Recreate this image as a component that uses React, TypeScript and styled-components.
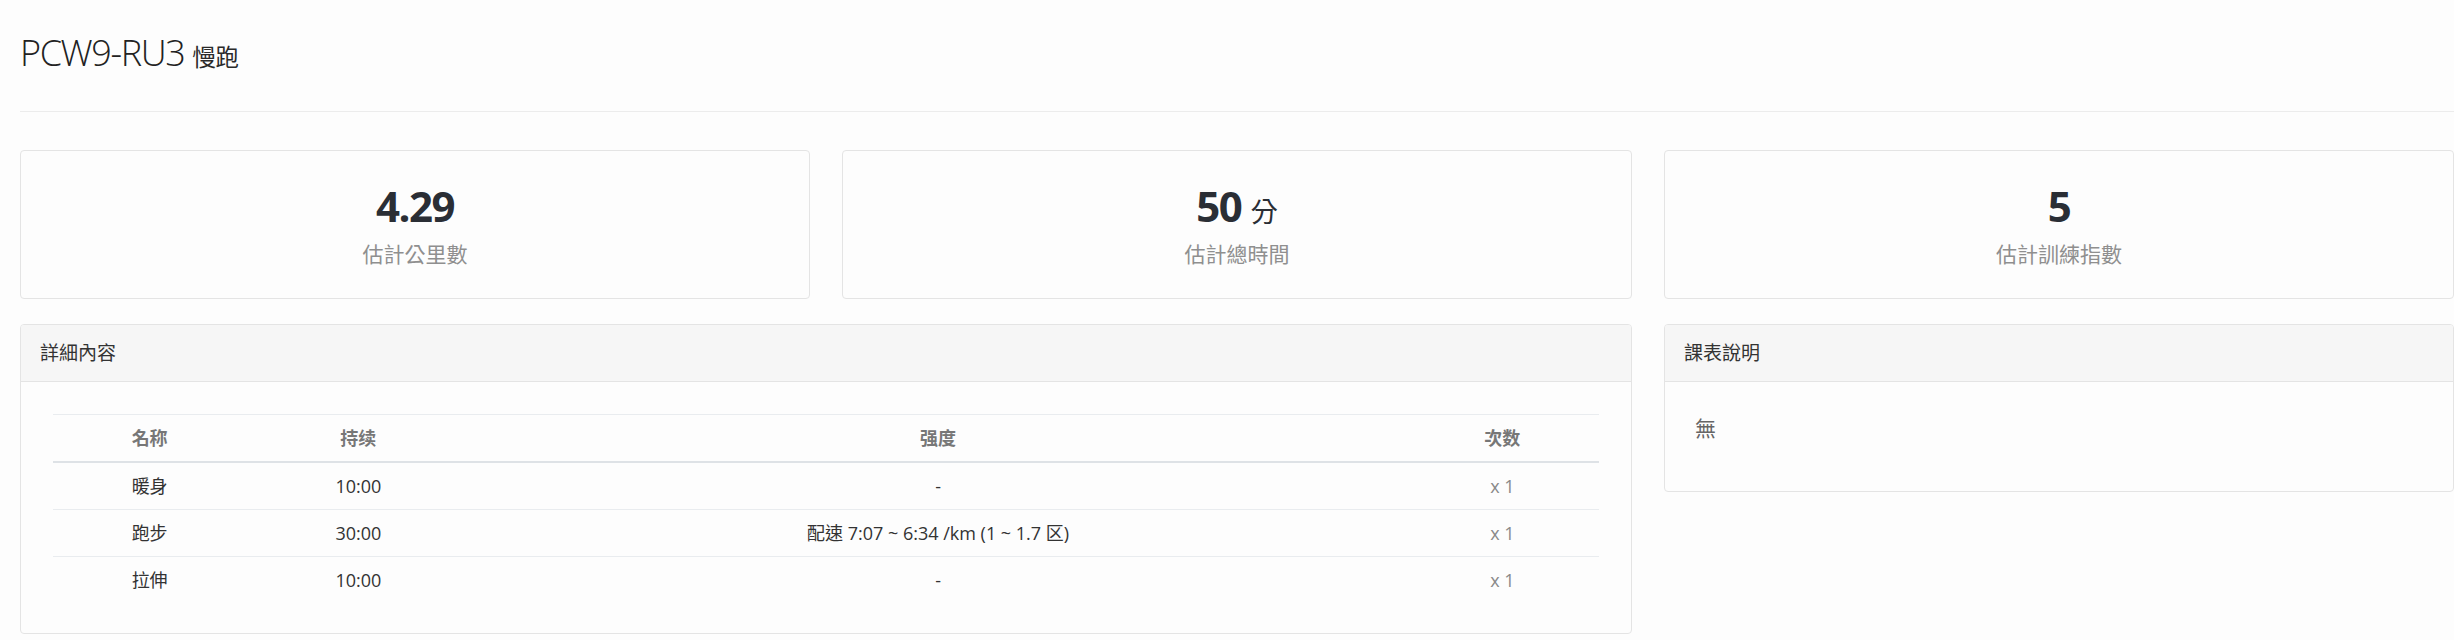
import React from 'react';
import styled, { createGlobalStyle } from 'styled-components';

const GlobalStyle = createGlobalStyle`
  html, body {
    margin: 0;
    padding: 0;
    background: #fdfdfd;
  }
  body {
    font-family: 'Open Sans', 'Noto Sans CJK TC', sans-serif;
    color: #333;
  }
`;

interface Step {
  name: string;
  duration: string;
  intensity: string;
  count: string;
}

const steps: Step[] = [
  { name: '暖身', duration: '10:00', intensity: '-', count: 'x 1' },
  { name: '跑步', duration: '30:00', intensity: '配速 7:07 ~ 6:34 /km (1 ~ 1.7 区)', count: 'x 1' },
  { name: '拉伸', duration: '10:00', intensity: '-', count: 'x 1' },
];

export default function App() {
  return (
    <Page>
      <GlobalStyle />
      <Header>
        <Title>
          PCW9-RU3 <TitleSmall>慢跑</TitleSmall>
        </Title>
      </Header>

      <StatsGrid>
        <StatCard>
          <StatValue>4.29</StatValue>
          <StatLabel>估計公里數</StatLabel>
        </StatCard>
        <StatCard>
          <StatValue>
            50 <StatUnit>分</StatUnit>
          </StatValue>
          <StatLabel>估計總時間</StatLabel>
        </StatCard>
        <StatCard>
          <StatValue>5</StatValue>
          <StatLabel>估計訓練指數</StatLabel>
        </StatCard>
      </StatsGrid>

      <DetailGrid>
        <Panel span={2}>
          <PanelHeading>詳細內容</PanelHeading>
          <TableBody>
            <ScheduleTable>
              <colgroup>
                <col style={{ width: '12.5%' }} />
                <col style={{ width: '14.5%' }} />
                <col style={{ width: '60.5%' }} />
                <col style={{ width: '12.5%' }} />
              </colgroup>
              <thead>
                <tr>
                  <Th>名称</Th>
                  <Th>持续</Th>
                  <Th>强度</Th>
                  <Th>次数</Th>
                </tr>
              </thead>
              <tbody>
                {steps.map(s => (
                  <tr key={s.name}>
                    <Td>{s.name}</Td>
                    <Td>{s.duration}</Td>
                    <Td>{s.intensity}</Td>
                    <Td muted>{s.count}</Td>
                  </tr>
                ))}
              </tbody>
            </ScheduleTable>
          </TableBody>
        </Panel>

        <Panel span={1}>
          <PanelHeading>課表說明</PanelHeading>
          <NoteBody>
            <NoteText>無</NoteText>
          </NoteBody>
        </Panel>
      </DetailGrid>
    </Page>
  );
}

const Page = styled.div`
  padding-left: 20px;
  width: 2434px;
`;

const Header = styled.div`
  padding: 33px 0 38px;
  border-bottom: 1px solid #ececec;
`;

const Title = styled.h1`
  margin: 0;
  font-size: 36px;
  font-weight: 300;
  line-height: 39.6px;
  letter-spacing: -1.4px;
  color: #222;
`;

const TitleSmall = styled.small`
  font-size: 65%;
  font-weight: 400;
  line-height: 1;
  letter-spacing: 0;
  color: #2a2a2a;
`;

const StatsGrid = styled.div`
  margin-top: 38px;
  display: grid;
  grid-template-columns: repeat(3, 1fr);
  column-gap: 32px;
`;

const StatCard = styled.div`
  border: 1px solid #e4e4e4;
  border-radius: 4px;
  background: #fdfdfd;
  padding: 30px 0 29px;
  text-align: center;
`;

const StatValue = styled.div`
  font-size: 42px;
  font-weight: 700;
  line-height: 50px;
  letter-spacing: -1.5px;
  color: #2a2e35;
`;

const StatUnit = styled.small`
  font-size: 65%;
  font-weight: 400;
  line-height: 1;
  letter-spacing: 0;
  color: #2a2e35;
`;

const StatLabel = styled.div`
  margin-top: 8px;
  font-size: 21px;
  line-height: 30px;
  color: #8f8f8f;
`;

const DetailGrid = styled.div`
  margin-top: 25px;
  display: grid;
  grid-template-columns: repeat(3, 1fr);
  column-gap: 32px;
  align-items: start;
`;

const Panel = styled.div<{ span: number }>`
  grid-column: span ${props => props.span};
  border: 1px solid #e4e4e4;
  border-radius: 4px;
  background: #fdfdfd;
  overflow: hidden;
`;

const PanelHeading = styled.div`
  padding: 13px 19px;
  font-size: 19px;
  line-height: 30px;
  color: #333;
  background: #f6f6f6;
  border-bottom: 1px solid #e4e4e4;
`;

const TableBody = styled.div`
  padding: 32px 32px 30px;
`;

const ScheduleTable = styled.table`
  width: 100%;
  border-collapse: collapse;
  table-layout: fixed;
  font-size: 18px;
`;

const Th = styled.th`
  padding: 10px 8px;
  line-height: 26px;
  font-weight: 700;
  color: #777;
  text-align: center;
  border-top: 1px solid #e9ecef;
  border-bottom: 2px solid #dee2e6;
`;

const Td = styled.td<{ muted?: boolean }>`
  padding: 10px 8px;
  line-height: 26px;
  text-align: center;
  color: ${props => (props.muted ? '#8a8a8a' : '#333')};
  border-top: 1px solid #e9ecef;
`;

const NoteBody = styled.div`
  padding: 32px 30px 49px;
`;

const NoteText = styled.p`
  margin: 0;
  font-size: 21px;
  line-height: 28px;
  color: #666;
`;
